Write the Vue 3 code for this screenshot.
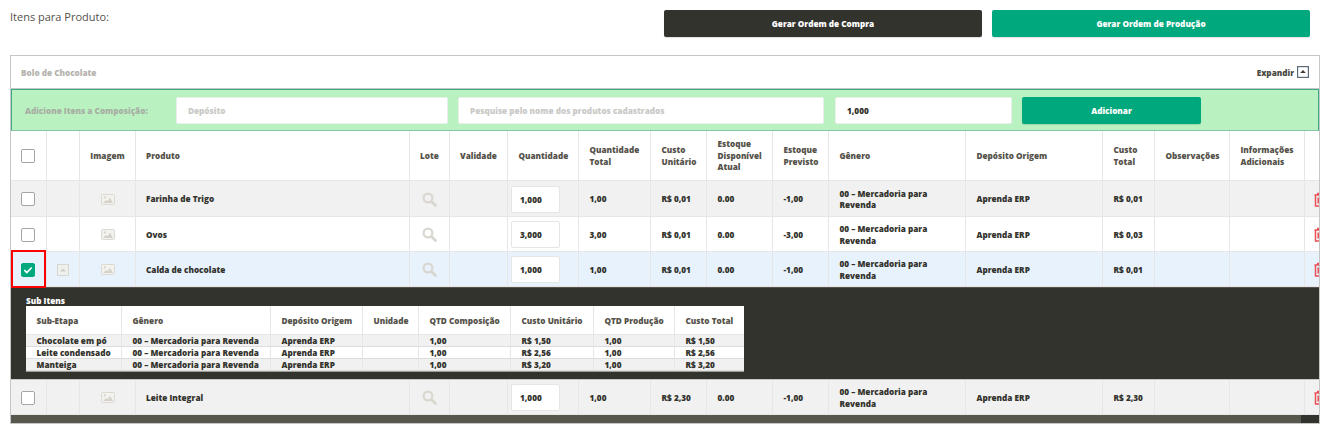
<script setup>
const cols = [36, 33, 56, 274, 40, 58, 71, 72, 56, 66, 56, 137, 137, 52, 75, 75, 40]
const heads = [
  { t: '', c: true }, { t: '' }, { t: 'Imagem', center: true }, { t: 'Produto', tight: true }, { t: 'Lote', tight: true }, { t: 'Validade', tight: true },
  { t: 'Quantidade' }, { t: 'Quantidade Total' }, { t: 'Custo Unitário' }, { t: 'Estoque Disponível Atual' },
  { t: 'Estoque Previsto' }, { t: 'Gênero' }, { t: 'Depósito Origem' }, { t: 'Custo Total' },
  { t: 'Observações' }, { t: 'Informações Adicionais' }, { t: '' }
]
const rows = [
  { name: 'Farinha de Trigo', q: '1,000', tot: '1,00', cu: 'R$ 0,01', prev: '-1,00', ct: 'R$ 0,01', cls: 'grey', h: 36 },
  { name: 'Ovos', q: '3,000', tot: '3,00', cu: 'R$ 0,01', prev: '-3,00', ct: 'R$ 0,03', cls: 'white', h: 35 },
  { name: 'Calda de chocolate', q: '1,000', tot: '1,00', cu: 'R$ 0,01', prev: '-1,00', ct: 'R$ 0,01', cls: 'blue', h: 35, open: true },
  { name: 'Leite Integral', q: '1,000', tot: '1,00', cu: 'R$ 2,30', prev: '-1,00', ct: 'R$ 2,30', cls: 'grey', h: 35 }
]
const subCols = [96, 149, 92, 56, 92, 83, 81, 69]
const subHeads = ['Sub-Etapa', 'Gênero', 'Depósito Origem', 'Unidade', 'QTD Composição', 'Custo Unitário', 'QTD Produção', 'Custo Total']
const subRows = [
  ['Chocolate em pó', 'R$ 1,50'],
  ['Leite condensado', 'R$ 2,56'],
  ['Manteiga', 'R$ 3,20']
]
</script>

<template>
  <div class="page">
    <div class="top">
      <div class="title">Itens para Produto:</div>
      <button class="btn dark">Gerar Ordem de Compra</button>
      <button class="btn green">Gerar Ordem de Produção</button>
    </div>

    <section class="panel">
      <div class="phead">
        <span class="pname">Bolo de Chocolate</span>
        <span class="expand">Expandir</span>
        <svg class="exp-ico" width="12" height="12" viewBox="0 0 12 12">
          <rect x=".6" y=".6" width="10.8" height="10.8" fill="#fff" stroke="#5a6a78" stroke-width="1.2" />
          <path d="M3.2 7 6 4l2.8 3z" fill="#3a3a34" />
        </svg>
      </div>

      <div class="addbar">
        <span class="addlabel">Adicione Itens a Composição:</span>
        <input class="field f1" placeholder="Depósito" readonly />
        <input class="field f2" placeholder="Pesquise pelo nome dos produtos cadastrados" readonly />
        <input class="field f3" value="1,000" readonly />
        <button class="btn green add">Adicionar</button>
      </div>

      <div class="tablewrap">
        <table class="grid">
          <colgroup><col v-for="(w, i) in cols" :key="i" :style="{ width: w + 'px' }" /></colgroup>
          <thead>
            <tr>
              <th v-for="(h, i) in heads" :key="i" :class="{ center: h.center, tight: h.tight }">
                <span v-if="h.c" class="check"></span>
                <template v-else>{{ h.t }}</template>
              </th>
            </tr>
          </thead>
          <tbody>
            <template v-for="r in rows" :key="r.name">
              <tr :class="r.cls" :style="{ height: r.h + 'px' }">
                <td class="cbcell" :class="{ marked: r.open }">
                  <span v-if="r.open" class="mark"></span>
                  <span class="check" :class="{ on: r.open }">
                    <svg v-if="r.open" width="10" height="8" viewBox="0 0 10 8"><path d="M1.3 4.2 3.8 6.5 8.7 1.5" fill="none" stroke="#fff" stroke-width="1.7" /></svg>
                  </span>
                </td>
                <td class="center icocell">
                  <svg v-if="r.open" width="12" height="12" viewBox="0 0 12 12">
                    <rect x=".5" y=".5" width="11" height="11" fill="#eef0ee" stroke="#d8d6cd" />
                    <path d="M3 7.5 6 4.2l3 3.3z" fill="#d2d0c6" />
                  </svg>
                </td>
                <td class="center icocell">
                  <svg width="14" height="11" viewBox="0 0 14 11">
                    <rect x=".5" y=".5" width="13" height="10" rx="1" fill="#f3f2ee" stroke="#dbd9d0" />
                    <circle cx="3.8" cy="3.4" r="1.1" fill="#d5d3c9" />
                    <path d="M2 9 5 6l1.5 1.2L9 3.8 12 9z" fill="#d5d3c9" />
                  </svg>
                </td>
                <td class="tight">{{ r.name }}</td>
                <td class="icocell lens">
                  <svg width="15" height="15" viewBox="0 0 15 15">
                    <circle cx="6" cy="6" r="4.4" fill="none" stroke="#d9d7cf" stroke-width="2.2" />
                    <path d="M9.4 9.4 13.5 13.5" stroke="#d9d7cf" stroke-width="2.8" stroke-linecap="round" />
                  </svg>
                </td>
                <td></td>
                <td class="qtycell"><input class="qty" :value="r.q" readonly /></td>
                <td>{{ r.tot }}</td>
                <td>{{ r.cu }}</td>
                <td>0.00</td>
                <td>{{ r.prev }}</td>
                <td>00 – Mercadoria para Revenda</td>
                <td>Aprenda ERP</td>
                <td class="nowrap">{{ r.ct }}</td>
                <td></td>
                <td></td>
                <td class="icocell trash">
                  <svg width="14" height="15" viewBox="0 0 14 15">
                    <path d="M3 1.5h4M.5 3h11M1.5 3v11h9V3" fill="none" stroke="#ea4f55" stroke-width="1.5" />
                    <path d="M4.2 5.5v6M7.8 5.5v6" stroke="#ea4f55" stroke-width="1.5" />
                  </svg>
                </td>
              </tr>
              <tr v-if="r.open" class="subrow">
                <td :colspan="cols.length">
                  <div class="subwrap">
                    <div class="subtitle">Sub Itens</div>
                    <table class="subtable">
                      <colgroup><col v-for="(w, i) in subCols" :key="i" :style="{ width: w + 'px' }" /></colgroup>
                      <thead><tr><th v-for="h in subHeads" :key="h">{{ h }}</th></tr></thead>
                      <tbody>
                        <tr v-for="(s, i) in subRows" :key="s[0]" :class="{ alt: i !== 1 }">
                          <td>{{ s[0] }}</td>
                          <td>00 – Mercadoria para Revenda</td>
                          <td>Aprenda ERP</td>
                          <td></td>
                          <td>1,00</td>
                          <td>{{ s[1] }}</td>
                          <td>1,00</td>
                          <td>{{ s[1] }}</td>
                        </tr>
                      </tbody>
                    </table>
                  </div>
                </td>
              </tr>
            </template>
          </tbody>
        </table>
      </div>
      <div class="scrollbar"><div class="thumb"></div></div>
    </section>
  </div>
</template>

<style>
html, body { background: #fff; }
</style>

<style scoped>
.page {
  width: 1325px;
  height: 425px;
  overflow: hidden;
  box-sizing: border-box;
  font-family: "Open Sans", sans-serif;
  font-size: 8.2px;
  font-weight: 800;
  color: #33332d;
}
.top {
  display: flex;
  align-items: flex-start;
  height: 55px;
  padding: 10px 15px 0 10px;
  box-sizing: border-box;
}
.title {
  margin-right: auto;
  margin-top: -1px;
  font-size: 11px;
  line-height: 16px;
  font-weight: 400;
  color: #55524c;
}
.btn {
  border: 0;
  border-radius: 2px;
  color: #fff;
  font: inherit;
  height: 27px;
  padding: 0;
  box-shadow: 0 1px 1px rgba(0, 0, 0, .12);
}
.top .btn { width: 318px; }
.top .green { margin-left: 10px; }
.dark { background: #33332d; }
.green { background: #00a87d; }

.panel {
  margin-left: 10px;
  width: 1310px;
  height: 369px;
  box-sizing: border-box;
  border: 1px solid #c6c6c6;
  overflow: hidden;
}
.phead {
  display: flex;
  align-items: center;
  height: 33px;
  padding: 0 10px;
  box-sizing: border-box;
  border-bottom: 1px solid #c6c6c6;
}
.pname { color: #b5b3ae; margin-right: auto; }
.expand { color: #4a4a44; }
.exp-ico { margin-left: 3px; }

.addbar {
  display: flex;
  align-items: center;
  height: 42px;
  box-sizing: border-box;
  background: #b9f2c0;
  border: 1px solid #3fa887;
  border-bottom-color: #86c4ac;
  padding-left: 13px;
}
.addlabel { width: 151px; color: #a8aea4; flex: none; }
.field {
  height: 27px;
  box-sizing: border-box;
  border: 1px solid #e9efe9;
  border-radius: 2px;
  background: #fff;
  padding: 0 11px;
  font: inherit;
  color: #33332d;
  outline: none;
}
.field::placeholder { color: #c9c9c6; opacity: 1; }
.f1 { width: 272px; }
.f2 { width: 366px; margin-left: 10px; }
.f3 { width: 177px; margin-left: 11px; }
.add { width: 179px; margin-left: 10px; }

.tablewrap { overflow: hidden; width: 1308px; }
.grid {
  table-layout: fixed;
  width: 1299px;
  border-collapse: separate;
  border-spacing: 0;
  line-height: 11.5px;
}
.grid > thead th {
  height: 50px;
  padding: 0 10.5px;
  box-sizing: border-box;
  text-align: left;
  font-weight: 800;
  color: #55524a;
  border-right: 1px solid #e6e6e6;
  border-bottom: 1px solid #e6e6e6;
  overflow: hidden;
}
.grid > thead th.center { text-align: center; padding: 0; }
.grid > thead th.tight { padding-left: 10px; }
.grid > tbody > tr > td {
  padding: 1px 10.5px 0;
  box-sizing: border-box;
  border-right: 1px solid #e6e6e6;
  border-bottom: 1px solid #e6e6e6;
  vertical-align: middle;
  overflow: hidden;
}
.grid > thead th:first-child { padding: 0 0 0 10px; }
.grid > tbody > tr > td.cbcell { padding: 1px 0 0 10px; }
.grey { background: #f1f1f1; }
.white { background: #fff; }
.blue { background: #e7f2fd; }
.grid > tbody > tr > td.tight { padding-left: 10px; }
.grid > tbody > tr > td.nowrap { padding-right: 0; white-space: nowrap; }
.grid > tbody > tr > td.center { padding: 1px 0 0; text-align: center; }
.grid > tbody > tr > td.qtycell { padding: 1px 0 0 3px; }
.grid > tbody > tr > td.lens { padding: 1px 0 0 12px; }
.grid > tbody > tr > td.trash { padding: 1px 0 0 9px; }
.icocell svg { display: block; }
.center.icocell svg { margin: 0 auto; }
.grid > tbody > tr > td.marked { position: relative; overflow: visible; }
.mark {
  position: absolute;
  left: 0;
  top: -2px;
  width: 35px;
  height: 38px;
  box-sizing: border-box;
  border: 2px solid #f00;
}
.check {
  display: flex;
  align-items: center;
  justify-content: center;
  width: 14px;
  height: 14px;
  box-sizing: border-box;
  border: 1px solid #a5a5a5;
  border-radius: 2px;
  background: #fff;
}
.check.on { background: #00a87d; border-color: #00a87d; }
.qty {
  display: block;
  width: 49px;
  height: 27px;
  box-sizing: border-box;
  border: 1px solid #e6e6e6;
  border-radius: 2px;
  background: #fff;
  padding: 0 0 0 8px;
  font: inherit;
  color: #33332d;
  outline: none;
}

.grid > tbody > tr.subrow > td {
  padding: 0;
  height: 93px;
  background: #33332d;
  border-top: 1px solid #55554e;
  border-right: 0;
  border-bottom: 1px solid #c9c9c9;
  vertical-align: top;
}
.subwrap { padding: 7px 0 0 15px; }
.subtitle { color: #fff; line-height: 11px; font-weight: 800; }
.subtable {
  table-layout: fixed;
  width: 718px;
  border-collapse: separate;
  border-spacing: 0;
  background: #fff;
  line-height: 11px;
  border-bottom: 1px solid #9c9c98;
}
.subtable th {
  height: 29px;
  padding: 0 0 0 10.5px;
  box-sizing: border-box;
  text-align: left;
  color: #55524a;
  font-weight: 800;
  border-right: 1px solid #e6e6e6;
  border-bottom: 1px solid #e6e6e6;
}
.subtable td {
  height: 12px;
  padding: 0 0 0 10.5px;
  box-sizing: border-box;
  white-space: nowrap;
  border-right: 1px solid #e6e6e6;
  border-bottom: 1px solid #dcdcdc;
  color: #33332d;
}
.subtable th:last-child, .subtable td:last-child { border-right: 0; }
.alt { background: #f1f1f1; }

.scrollbar { height: 8px; width: 1308px; background: #33332d; }
.thumb { width: 1290px; height: 8px; background: #58574e; }
</style>
